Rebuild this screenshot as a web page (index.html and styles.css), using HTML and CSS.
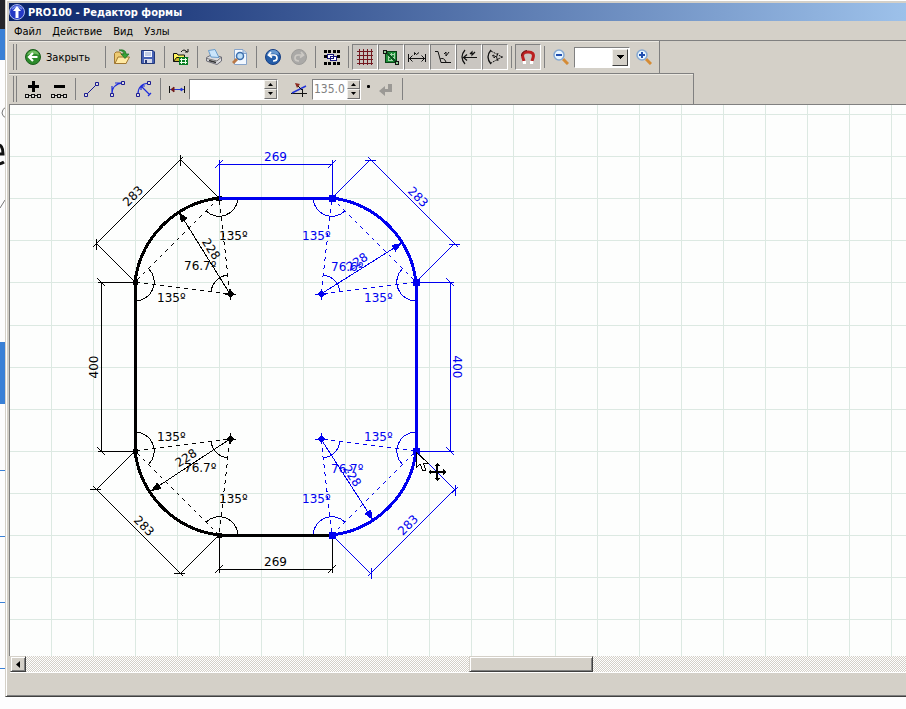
FILE: index.html
```
<!DOCTYPE html>
<html lang="ru">
<head>
<meta charset="utf-8">
<title>PRO100 - Редактор формы</title>
<link rel="stylesheet" href="styles.css">
</head>
<body>
<div class="desktop">
  <aside class="behind">
    <svg width="5" height="709" aria-hidden="true">
      <rect width="5" height="29" fill="#24252c"/>
      <rect y="29" width="5" height="31" fill="#3a80d6"/>
      <path d="M6 107Q2 109 2 113Q2 116 6 118" fill="none" stroke="#777" stroke-width="1"/>
      <path d="M-3 145Q3 144 3 154H-3M-3 164Q1 164 4 162" fill="none" stroke="#111" stroke-width="3"/>
      <path d="M0 208L5 200" stroke="#777"/>
      <rect y="342" width="5" height="62" fill="#3a80d6"/>
      <path d="M0 470.500H5M0 536.500H5M0 602.500H5M0 668.500H5" stroke="#3a80d6"/>
    </svg>
  </aside>
  <main class="window">
    <header class="titlebar">
      <svg width="16" height="16" viewBox="0 0 16 16" aria-hidden="true">
        <circle cx="8" cy="8" r="7.500" fill="#2338c4" stroke="#a9b8ec"/>
        <path d="M3 5Q8 0 13 5" fill="none" stroke="#6f86e8" stroke-width="2"/>
        <path d="M8 2L12 7H9.500V14H6.500V7H4Z" fill="#fff"/>
      </svg>
      <h1>PRO100 - Редактор формы</h1>
    </header>
    <nav class="menu">
      <button>Файл</button><button>Действие</button><button>Вид</button><button>Узлы</button>
    </nav>

    <div class="toolbar main-tools">
      <span class="grip"></span>
      <button class="tool close">
        <svg width="16" height="16" viewBox="0 0 16 16"><circle cx="8" cy="8" r="7.500" fill="#2c8a2b" stroke="#1a5d1b"/><path d="M2 6Q4 1 9 1.500Q13 2 14 6Q8 3 2 6" fill="#72bd63"/><path d="M8 4L4 8L8 12M4.500 8H12.500" fill="none" stroke="#fff" stroke-width="2.200"/></svg>
        <span>Закрыть</span>
      </button>
      <span class="sep"></span>
      <button class="tool" aria-label="Открыть"><svg width="16" height="16" viewBox="0 0 16 16"><path d="M.5 14.500V4.500L2 3H6L7 5H12V14.500Z" fill="#edcb73" stroke="#a17831"/><path d="M1 14.500L4 8H15.500L12 14.500Z" fill="#ffe9a3" stroke="#a17831"/><path d="M5 1Q12 0 12 5H15L11 9.500L7 5H10Q10 2 5 1Z" fill="#37a237" stroke="#176a20" stroke-width=".7"/></svg></button>
      <button class="tool" aria-label="Сохранить"><svg width="16" height="16" viewBox="0 0 16 16"><path d="M1.500 1.500H13L14.500 3V14.500H1.500Z" fill="#4661b4" stroke="#223777"/><path d="M4 2H12V8H4Z" fill="#f5f7fd"/><path d="M5 4H11M5 6H11" stroke="#8ba0cf"/><path d="M4 10H12V14H4Z" fill="#d6dae9"/><path d="M5 11H7V14H5Z" fill="#263a79"/></svg></button>
      <span class="sep"></span>
      <button class="tool" aria-label="Импорт"><svg width="16" height="16" viewBox="0 0 16 16"><path d="M8 3Q11 -1 14 3M12 3H15V0" fill="none" stroke="#111"/><path d="M.5 12.500V4.500H4L5 6H11.500V8" fill="#fff45b" stroke="#111"/><path d="M.5 12.500L3.500 8.500H15L11 12.500Z" fill="#c9b929" stroke="#111"/><path d="M6 8H15V16H6Z" fill="#087c22"/><path d="M7 10.500H14M7 13.500H14M8.500 9V15M12.500 9V15" stroke="#eaffea"/></svg></button>
      <span class="sep"></span>
      <button class="tool" aria-label="Печать"><svg width="16" height="16" viewBox="0 0 16 16"><path d="M.5 8.500L5 6L15.500 8V12L11 15.500L.5 12Z" fill="#dcdcdf" stroke="#6c6c76"/><path d="M5 8L2.500 1.500L9 .5L13 8.500Z" fill="#cae5fb" stroke="#6b9dcb"/><path d="M1 9.500L11 12L15 8.500" fill="none" stroke="#777"/><path d="M3 11.500L10 13.500" stroke="#333" stroke-width="1.500"/></svg></button>
      <button class="tool" aria-label="Просмотр"><svg width="16" height="16" viewBox="0 0 16 16"><path d="M2.500 .5H11L14.500 4V15.500H2.500Z" fill="#f2f8ff" stroke="#87a4ca"/><path d="M11 1V4.500H14" fill="#bdd5f0" stroke="#87a4ca"/><circle cx="8" cy="7" r="3.500" fill="#bfe0f9" stroke="#3d6fad" stroke-width="1.500"/><path d="M5 10L1 14" stroke="#ba7845" stroke-width="3"/></svg></button>
      <span class="sep"></span>
      <button class="tool" aria-label="Отменить"><svg width="16" height="16" viewBox="0 0 16 16"><circle cx="8" cy="8" r="7.500" fill="#245da9" stroke="#173e83"/><path d="M2 6Q4 1 8 1Q13 1 14 6Q8 3 2 6" fill="#6899d0"/><path d="M6 3L3.500 6L7 8.500M4 6H9Q12 6 12 9Q12 12 8 12" fill="none" stroke="#fff" stroke-width="1.700"/></svg></button>
      <button class="tool" aria-label="Повторить" disabled><svg width="16" height="16" viewBox="0 0 16 16"><circle cx="8" cy="8" r="7.500" fill="#aaa9a7" stroke="#9d9c99"/><path d="M10 3L12.500 6L9 8.500M12 6H7Q4 6 4 9Q4 12 8 12" fill="none" stroke="#ccc9c4" stroke-width="1.700"/></svg></button>
      <span class="sep"></span>
      <button class="tool" aria-label="Выделить всё"><svg width="16" height="16" viewBox="0 0 16 16" shape-rendering="crispEdges"><path d="M0 1h3v3h-3zM4 1h3v3h-3zM9 1h3v3h-3zM13 1h3v3h-3zM0 6h3v3h-3zM13 6h3v3h-3zM0 13h3v3h-3zM4 13h3v3h-3zM9 13h3v3h-3zM13 13h3v3h-3z"/><path d="M3.500 5.500H9.500V9.500H3.500ZM6.500 7.500H12.500V11.500H6.500Z" fill="#fff" stroke="#16167e"/></svg></button>
      <span class="sep"></span>
      <div class="toggles">
        <button class="tool on" aria-pressed="true" aria-label="Сетка"><svg width="16" height="16" viewBox="0 0 16 16" shape-rendering="crispEdges"><path d="M2.500 0V16M6.500 0V16M10.500 0V16M14.500 0V16M0 2.500H16M0 6.500H16M0 10.500H16M0 14.500H16" stroke="#741820"/></svg></button>
        <button class="tool on" aria-pressed="true" aria-label="Заливка"><svg width="16" height="16" viewBox="0 0 16 16" shape-rendering="crispEdges"><path d="M2.500 2.500H13.500V13.500H2.500Z" fill="#1b8c36" stroke="#073f14"/><path d="M5 5.500H12M5 8.500H12M5 11.500H12M5.500 4V12M8.500 4V12M11.500 4V12" stroke="#a5d6ab"/><path d="M3 3L13 13" stroke="#0c5520" stroke-width="2"/><path d="M.5 1.500H3.500V4.500H.5ZM12.500 12.500H15.500V15.500H12.500Z" fill="#8bcb94" stroke="#111"/></svg></button>
        <button class="tool on" aria-pressed="true" aria-label="Размеры"><svg width="18" height="16" viewBox="0 0 18 16"><path d="M.5 5V13M17.500 5V13M1 9.500H17M4.500 6.500L1.500 9.500L4.500 12.500M13.500 6.500L16.500 9.500L13.500 12.500M6.500 6V3.500L8.500 5.500L11 3.500" fill="none" stroke="#111"/></svg></button>
        <button class="tool on" aria-pressed="true" aria-label="Углы"><svg width="16" height="16" viewBox="0 0 16 16"><path d="M0 2.500H3L6 13.500H16M5 10Q9 8 11 13M9 5L11 3V7L14 3" fill="none" stroke="#111"/></svg></button>
        <button class="tool on" aria-pressed="true" aria-label="Радиусы"><svg width="16" height="16" viewBox="0 0 16 16"><path d="M4 1Q-2 8 4 15M2 8.500H16M6 5.500L2.500 8.500L6 11.500M9 5L11 3V6L14 3" fill="none" stroke="#111" stroke-width="1.200"/></svg></button>
        <button class="tool on" aria-pressed="true" aria-label="Углы дуг"><svg width="16" height="16" viewBox="0 0 16 16"><path d="M4 1Q-2 8 4 15" fill="none" stroke="#111" stroke-width="1.300"/><path d="M4 2L15 8L4 14" fill="none" stroke="#111" stroke-dasharray="2 1"/><path d="M11 4Q8 8 11 12M5 7L7 6V9L9 7M14 8H16" fill="none" stroke="#111"/></svg></button>
      </div>
      <span class="sep"></span>
      <button class="tool on" aria-pressed="true" aria-label="Привязка"><svg width="16" height="16" viewBox="0 0 16 16"><path d="M4 12L3 9Q1 3 8 3Q15 3 13 9L12 12" fill="none" stroke="#bb2020" stroke-width="3"/><path d="M2.500 12H6V15H3ZM10 12H13.500L13 15H10Z" fill="#fff"/><path d="M1.500 7Q2 2 7 1.500" fill="none" stroke="#641414"/></svg></button>
      <span class="sep"></span>
      <button class="tool" aria-label="Уменьшить"><svg width="16" height="16" viewBox="0 0 16 16"><path d="M10 10L15 15" stroke="#d58b35" stroke-width="3"/><circle cx="6" cy="6" r="5" fill="#e8f6ff" stroke="#86a8d1" stroke-width="1.500"/><path d="M3 6H9" stroke="#204fb0" stroke-width="2"/></svg></button>
      <span class="combo"><select aria-label="Масштаб"><option></option><option>100%</option></select><span class="drop"><svg width="7" height="4" viewBox="0 0 7 4" shape-rendering="crispEdges"><path d="M0 0H7L3.500 4Z"/></svg></span></span>
      <button class="tool zoom-in" aria-label="Увеличить"><svg width="16" height="16" viewBox="0 0 16 16"><path d="M10 10L15 15" stroke="#d58b35" stroke-width="3"/><circle cx="6" cy="6" r="5" fill="#e8f6ff" stroke="#86a8d1" stroke-width="1.500"/><path d="M3 6H9M6 3V9" stroke="#204fb0" stroke-width="2"/></svg></button>
    </div>

    <div class="toolbar node-tools">
      <span class="grip"></span>
      <button class="tool" aria-label="Добавить узел"><svg width="16" height="18" viewBox="0 0 16 18" shape-rendering="crispEdges"><path d="M7 1H10V5H14V8H10V12H7V8H3V5H7Z"/><path d="M1 15.500H15" stroke="#111"/><path d="M.5 14.500H3.500V17.500H.5ZM6.500 14.500H9.500V17.500H6.500ZM12.500 14.500H15.500V17.500H12.500Z" fill="#ddd" stroke="#111"/></svg></button>
      <button class="tool" aria-label="Удалить узел"><svg width="16" height="18" viewBox="0 0 16 18" shape-rendering="crispEdges"><path d="M3 5H14V8H3Z"/><path d="M1 15.500H15" stroke="#111"/><path d="M.5 14.500H3.500V17.500H.5ZM6.500 14.500H9.500V17.500H6.500ZM12.500 14.500H15.500V17.500H12.500Z" fill="#ddd" stroke="#111"/></svg></button>
      <span class="sep"></span>
      <button class="tool" aria-label="Отрезок"><svg width="16" height="16" viewBox="0 0 16 16"><path d="M2 14L13 3" stroke="#1b1b91"/><path d="M.5 12.500H3.500V15.500H.5ZM11.500 1.500H14.500V4.500H11.500Z" fill="#ddd" stroke="#1b1b91"/></svg></button>
      <button class="tool" aria-label="Дуга по касательной"><svg width="16" height="16" viewBox="0 0 16 16"><path d="M2 13Q2 3 13 2M2 13V5M12 2H5" fill="none" stroke="#1d2ddb" stroke-width="1.200"/><path d="M.5 12.500H3.500V15.500H.5ZM11.500 .5H14.500V3.500H11.500Z" fill="#ddd" stroke="#1b1b91"/></svg></button>
      <button class="tool" aria-label="Дуга по радиусу"><svg width="16" height="16" viewBox="0 0 16 16"><path d="M2 13Q2 3 13 2M14 14L5 5M5 9V5H9M12 15L15 12" fill="none" stroke="#1d2ddb" stroke-width="1.200"/><path d="M.5 12.500H3.500V15.500H.5ZM11.500 .5H14.500V3.500H11.500Z" fill="#ddd" stroke="#1b1b91"/></svg></button>
      <span class="sep"></span>
      <label class="tool" for="length"><svg width="16" height="16" viewBox="0 0 16 16" role="img" aria-label="Длина"><path d="M1 8.500H15" stroke="#2334d8"/><path d="M.5 5V12M15.500 5V12" stroke="#111"/><path d="M5 6V11L2 8.500Z" fill="#701b1b" stroke="#701b1b"/><path d="M12 7V10L14 8.500Z" fill="#2334d8" stroke="#2334d8"/></svg></label>
      <span class="spin long"><input id="length" type="text"><span class="steps"><button aria-label="Больше"><svg width="5" height="3" viewBox="0 0 5 3"><path d="M0 3H5L2.500 0Z"/></svg></button><button aria-label="Меньше"><svg width="5" height="3" viewBox="0 0 5 3"><path d="M0 0H5L2.500 3Z"/></svg></button></span></span>
      <label class="tool angle-icon" for="angle"><svg width="16" height="16" viewBox="0 0 16 16" role="img" aria-label="Угол"><path d="M0 12.500H16M11.500 8V16" stroke="#111"/><path d="M1 12L15 5" stroke="#2334d8" stroke-width="1.500"/><path d="M6 4L11 9" stroke="#111"/><path d="M4 2L9 3L6 7Z" fill="#8c281d"/></svg></label>
      <span class="spin short"><input id="angle" type="text" value="135.0" disabled><span class="steps"><button aria-label="Больше"><svg width="5" height="3" viewBox="0 0 5 3"><path d="M0 3H5L2.500 0Z"/></svg></button><button aria-label="Меньше"><svg width="5" height="3" viewBox="0 0 5 3"><path d="M0 0H5L2.500 3Z"/></svg></button></span></span>
      <span class="degree"></span>
      <button class="tool" aria-label="Применить" disabled><svg width="16" height="16" viewBox="0 0 16 16"><path d="M10 3H14V11H7V15L1 10L7 5V8H10Z" fill="#9b9995"/></svg></button>
      <span class="sep"></span>
    </div>

    <section class="canvas" aria-label="Чертёж">
      <svg width="100%" height="100%">
        <defs>
          <pattern id="columns" x="41" width="42" height="42" patternUnits="userSpaceOnUse"><path d="M0 0H1V42H0Z" fill="#dce9e2"/></pattern>
          <!-- Rounded corner with construction lines, drawn for the top left -->
          <g id="corner">
            <path d="M219 198A96 96 0 0 0 135 282" stroke-width="3"/>
            <path d="M219 198L135 282L230 294Z" stroke-dasharray="4 4"/>
            <path d="M238 199A19 19 0 0 1 206 211M136 301A19 19 0 0 0 149 269M211 292A19 19 0 0 1 228 275"/>
            <path d="M219 198L180 159M135 282L96 243M180 160L96 244"/>
            <path d="M226 294L230 290L234 294L230 298Z" fill="currentColor" stroke="none"/>
            <path d="M225 294H236M230 289V300"/>
          </g>
          <g id="slash"><path d="M-4 4L4 -4"/></g>
          <g id="tick"><path d="M0 -5V6M-3 3L3 -3"/></g>
          <path id="arrow" d="M0 0L-10 -4V4Z" fill="currentColor" stroke="none"/>
          <path id="node" d="M-4 -4H3V3H-4Z" fill="currentColor" stroke="none"/>
        </defs>
        <rect width="100%" height="100%" fill="url(#columns)"/>
        <g class="drawing" transform="translate(-10 -105)">
          <path class="rows" d="M10 114H2600M10 156H2600M10 198H2600M10 240H2600M10 282H2600M10 325H2600M10 367H2600M10 409H2600M10 451H2600M10 493H2600M10 535H2600M10 577H2600M10 619H2600"/>
          <g class="plain">
            <use href="#corner"/>
            <use href="#corner" transform="translate(0 733) scale(1 -1)"/>
            <path d="M135 282V451M219 535H332" stroke-width="3"/>
            <path d="M135 282H98M135 451H98M101 282V451M219 535V573M332 535V573M219 569H332"/>
            <path d="M230 294L179 212M230 439L151 491"/>
            <use href="#arrow" transform="translate(179 212) rotate(-122)"/>
            <use href="#arrow" transform="translate(151 491) rotate(147)"/>
            <use href="#tick" x="180" y="160"/><use href="#tick" x="96" y="244"/>
            <use href="#tick" transform="translate(96 489) rotate(90)"/><use href="#tick" transform="translate(180 573) rotate(90)"/>
            <use href="#slash" transform="translate(101 282) rotate(90)"/><use href="#slash" transform="translate(101 451) rotate(90)"/>
            <use href="#slash" x="219" y="569"/><use href="#slash" x="332" y="569"/>
            <path d="M217 196H222V201H217ZM133 280H138V285H133ZM133 449H138V454H133ZM217 533H222V538H217Z" fill="currentColor" stroke="none"/>
            <text x="219" y="240">135º</text><text x="157" y="302">135º</text><text x="184" y="270">76.7º</text>
            <text x="157" y="441">135º</text><text x="219" y="503">135º</text><text x="184" y="472">76.7º</text>
            <text x="264" y="566">269</text>
            <text class="turned" transform="translate(133 196) rotate(-45)" y="4">283</text>
            <text class="turned" transform="translate(144 526) rotate(45)" y="4">283</text>
            <text class="turned" transform="translate(211 249) rotate(58)" y="4">228</text>
            <text class="turned" transform="translate(186 458) rotate(-32)" y="4">228</text>
            <text class="turned" transform="translate(94 367) rotate(-90)" y="4">400</text>
          </g>
          <g class="picked">
            <use href="#corner" transform="translate(551 0) scale(-1 1)"/>
            <use href="#corner" transform="translate(551 733) scale(-1 -1)"/>
            <path d="M219 198H332M416 282V451" stroke-width="3"/>
            <path d="M219 198V160M332 198V160M219 164H332M416 282H454M416 451H454M450 282V451"/>
            <path d="M321 294L402 243M321 439L373 520"/>
            <use href="#arrow" transform="translate(402 243) rotate(-32)"/>
            <use href="#arrow" transform="translate(373 520) rotate(57)"/>
            <use href="#tick" transform="translate(371 160) rotate(90)"/><use href="#tick" transform="translate(455 244) rotate(90)"/>
            <use href="#tick" x="455" y="490"/><use href="#tick" x="371" y="573"/>
            <use href="#slash" x="219" y="164"/><use href="#slash" x="332" y="164"/>
            <use href="#slash" transform="translate(450 282) rotate(90)"/><use href="#slash" transform="translate(450 451) rotate(90)"/>
            <use href="#node" x="333" y="199"/><use href="#node" x="417" y="283"/><use href="#node" x="417" y="452"/><use href="#node" x="333" y="536"/>
            <text x="302" y="240">135º</text><text x="364" y="302">135º</text><text x="331" y="271">76.6º</text>
            <text x="364" y="441">135º</text><text x="302" y="503">135º</text><text x="331" y="473">76.7º</text>
            <text x="264" y="161">269</text>
            <text class="turned" transform="translate(418 197) rotate(45)" y="4">283</text>
            <text class="turned" transform="translate(408 525) rotate(-45)" y="4">283</text>
            <text class="turned" transform="translate(357 262) rotate(-32)" y="4">228</text>
            <text class="turned" transform="translate(352 476) rotate(58)" y="4">228</text>
            <text class="turned" transform="translate(457 367) rotate(90)" y="4">400</text>
          </g>
          <g class="pointer">
            <path d="M416 452V468L420 464L423 471L426 470L423 463H428Z"/>
            <path d="M437 463L440 466H438V471H443V469L446 472L443 475V473H438V478H440L437 481L434 478H436V473H431V475L428 472L431 469V471H436V466H434Z" class="move"/>
          </g>
        </g>
      </svg>
    </section>
    <div class="scrollbar">
      <button class="scroll-left" aria-label="Влево"><svg width="4" height="7" viewBox="0 0 4 7"><path d="M4 0V7L0 3.500Z"/></svg></button>
      <span class="track-before"></span><span class="thumb"></span><span class="track-after"></span>
    </div>
    <footer class="status"></footer>
  </main>
</div>
</body>
</html>
```

FILE: styles.css
```
* { box-sizing: border-box; }
body {
  margin: 0;
  background: #fdfdfe;
  font: 12px "DejaVu Sans Condensed", "DejaVu Sans", sans-serif;
  color: #000;
  overflow: hidden;
}
button, input, select { font: inherit; color: inherit; border-radius: 0; margin: 0; padding: 0; }
button { border: 0; background: none; }
svg { display: block; flex: none; }

.desktop { display: flex; height: 100vh; overflow: hidden; }
.behind { flex: none; width: 5px; overflow: hidden; }
.window {
  flex: 1;
  min-width: 0;
  height: calc(100vh - 12px);
  display: flex;
  flex-direction: column;
  background: #d4d0c8;
  border-left: 1px solid #d4d0c8;
  border-bottom: 1px solid #404040;
  box-shadow: inset 1px 1px #fff, inset 0 -1px #808080;
  padding: 3px 0 2px 3px;
}
.titlebar {
  flex: none;
  height: 18px;
  display: flex;
  align-items: center;
  gap: 3px;
  background: linear-gradient(90deg, #0a246a, #9dc1ea);
  color: #fff;
}
.titlebar h1 { margin: 0; font-size: 11px; font-weight: bold; }
.menu { flex: none; height: 20px; display: flex; border-bottom: 1px solid #808080; }
.menu button { padding: 1px 6px 0 5px; font-size: 11px; }

.toolbar {
  flex: none;
  display: flex;
  align-items: center;
  align-self: flex-start;
  height: 32px;
  padding-left: 4px;
  border-right: 1px solid #808080;
  box-shadow: inset 0 1px #ece9e2;
}
.main-tools { width: 651px; }
.node-tools { width: 685px; height: 31px; border-top: 1px solid #808080; }
.grip { width: 4px; height: 26px; margin-right: 3px; border: solid #808080; border-width: 0 1px; }
.tool { flex: none; width: 26px; height: 26px; display: flex; align-items: center; justify-content: center; }
.close { width: 82px; gap: 5px; justify-content: flex-start; padding-left: 5px; font-size: 11px; }
.sep { flex: none; width: 7px; height: 22px; padding-left: 3px; }
.sep::before { content: ""; display: block; width: 1px; height: 22px; background: #808080; }
.on { border: 1px solid; border-color: #808080 #fff #fff #808080; background: #cac6c1; }
.toggles { display: flex; }

.combo { position: relative; width: 56px; height: 21px; }
.combo select { appearance: none; width: 100%; height: 100%; border: 1px solid; border-color: #808080 #fff #fff #808080; background: #fff; }
.zoom-in { margin-left: 1px; }
.drop {
  position: absolute;
  top: 2px;
  right: 2px;
  width: 16px;
  height: 17px;
  display: grid;
  place-items: center;
  background: #d4d0c8;
  border: 1px solid;
  border-color: #f4f2ee #404040 #404040 #f4f2ee;
  pointer-events: none;
}

.spin { display: flex; height: 21px; background: #fff; border: 1px solid; border-color: #808080 #fff #fff #808080; }
.spin input { flex: 1; min-width: 0; border: 0; padding: 0 1px; background: none; }
.spin input:disabled { color: #808080; }
.long { width: 89px; margin-left: -1px; }
.short { width: 49px; }
.angle-icon { margin-left: 8px; }
.steps { flex: none; width: 13px; display: flex; flex-direction: column; }
.steps button { flex: 1; display: grid; place-items: center; background: #d4d0c8; border: 1px solid; border-color: #f4f2ee #707070 #707070 #f4f2ee; }
.degree { width: 3px; height: 3px; margin: 0 3px 6px 6px; background: #000; border-radius: 1px; }

.canvas { flex: 1; min-height: 0; border: solid #808080; border-width: 1px 0 0 1px; background: #fdfefd; overflow: hidden; }
.drawing { shape-rendering: crispEdges; fill: none; stroke-width: 1px; }
.rows { stroke: #dce9e2; }
.plain { color: #000; stroke: #000; }
.picked { color: #0000f0; stroke: #0000f0; }
.drawing text { font: 12px "DejaVu Sans", sans-serif; fill: currentColor; stroke: none; }
.drawing .turned { text-anchor: middle; }
.pointer path { fill: #fff; stroke: #000; }
.pointer .move { fill: #000; stroke: none; }

.scrollbar { flex: none; height: 17px; display: flex; margin-left: 1px; border-bottom: 1px solid #fff; background: repeating-conic-gradient(#d4d0c8 0 25%, #fff 0 50%) 0 0 / 2px 2px; }
.scroll-left { width: 16px; display: grid; place-items: center; }
.scroll-left, .thumb { background: #d4d0c8; border: 1px solid; border-color: #d4d0c8 #404040 #404040 #d4d0c8; box-shadow: inset 1px 1px #fff, inset -1px -1px #808080; }
.track-before { flex: 444; }
.thumb { flex: 122; }
.track-after { flex: 314; }
.status { flex: none; height: 21px; }
```
